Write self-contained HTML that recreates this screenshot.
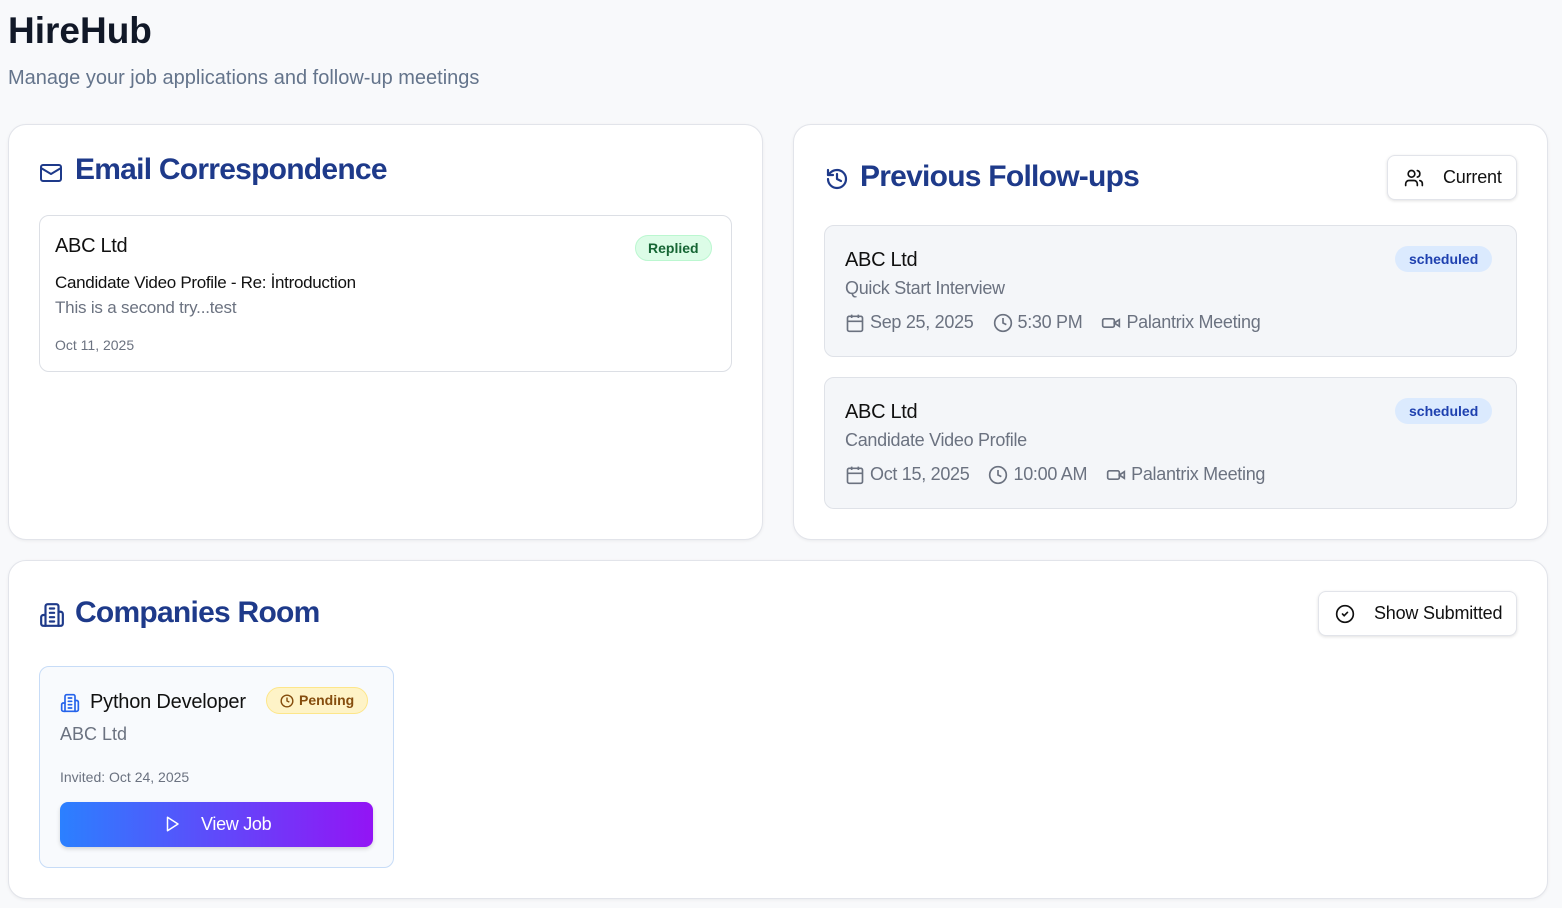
<!DOCTYPE html>
<html><head><meta charset="utf-8"><style>
*{box-sizing:border-box;margin:0;padding:0}
body{width:1562px;height:908px;background:#f8f9fb;font-family:"Liberation Sans",sans-serif;position:relative;overflow:hidden;color:#111827}
.a{position:absolute}
.card{position:absolute;background:#fff;border:1px solid #e2e4ea;border-radius:18px;box-shadow:0 1px 3px rgba(0,0,0,.06)}
h2{position:absolute;font-size:30px;font-weight:700;color:#1e3a8a;letter-spacing:-0.75px}
.btn{position:absolute;background:#fff;border:1px solid #e2e4ea;border-radius:8px;box-shadow:0 1px 3px rgba(0,0,0,.12);font-size:18px;color:#111;letter-spacing:-0.2px}
.fu{position:absolute;left:30px;width:693px;height:132px;background:#f4f6f9;border:1px solid #dfe2e8;border-radius:10px}
.badge{position:absolute;background:#dbeafe;color:#1e40af;font-weight:700;font-size:14px;border-radius:14px;height:26px;line-height:26px;padding:0 14px}
.meta{position:absolute;left:20px;top:86px;font-size:18px;color:#6b7280;display:flex;align-items:center;white-space:nowrap;letter-spacing:-0.3px}
.meta svg{margin-right:5px}
</style></head><body>
<div class="a" style="left:8px;top:10px;font-size:37px;font-weight:700;color:#111827">HireHub</div>
<div class="a" style="left:8px;top:67px;font-size:20px;color:#64748b">Manage your job applications and follow-up meetings</div>

<div class="card" style="left:8px;top:124px;width:755px;height:416px">
 <svg class="a" style="left:30px;top:36px" width="24" height="24" viewBox="0 0 24 24" fill="none" stroke="#1e3a8a" stroke-width="2" stroke-linecap="round" stroke-linejoin="round"><rect x="2" y="4" width="20" height="16" rx="2"/><path d="m22 7-10 6L2 7"/></svg>
 <h2 style="left:66px;top:28px">Email Correspondence</h2>
 <div class="a" style="left:30px;top:90px;width:693px;height:157px;border:1px solid #dcdfe5;border-radius:10px">
  <div class="a" style="left:15px;top:19px;font-size:20px;color:#111;letter-spacing:-0.3px">ABC Ltd</div>
  <div class="a" style="left:595px;top:19px;background:#dcfce7;border:1px solid #bbf7d0;color:#166534;font-weight:700;font-size:14px;border-radius:14px;height:26px;line-height:24px;padding:0 12px">Replied</div>
  <div class="a" style="left:15px;top:57px;font-size:17px;color:#111;letter-spacing:-0.3px">Candidate Video Profile - Re: İntroduction</div>
  <div class="a" style="left:15px;top:82px;font-size:17px;color:#6b7280;letter-spacing:-0.2px">This is a second try...test</div>
  <div class="a" style="left:15px;top:121px;font-size:14px;color:#6b7280">Oct 11, 2025</div>
 </div>
</div>

<div class="card" style="left:793px;top:124px;width:755px;height:416px">
 <svg class="a" style="left:31px;top:42px" width="24" height="24" viewBox="0 0 24 24" fill="none" stroke="#1e3a8a" stroke-width="2.2" stroke-linecap="round" stroke-linejoin="round"><path d="M3 12a9 9 0 1 0 9-9 9.75 9.75 0 0 0-6.74 2.74L3 8"/><path d="M3 3v5h5"/><path d="M12 7v5l4 2"/></svg>
 <h2 style="left:66px;top:35px">Previous Follow-ups</h2>
 <div class="btn" style="left:593px;top:30px;width:130px;height:45px">
  <svg class="a" style="left:16px;top:12px" width="20" height="20" viewBox="0 0 24 24" fill="none" stroke="#111" stroke-width="2" stroke-linecap="round"><path d="M16 21v-2a4 4 0 0 0-4-4H6a4 4 0 0 0-4 4v2"/><circle cx="9" cy="7" r="4"/><path d="M22 21v-2a4 4 0 0 0-3-3.87M16 3.13a4 4 0 0 1 0 7.75"/></svg>
  <span class="a" style="left:55px;top:11px">Current</span>
 </div>
 <div class="fu" style="top:100px">
  <div class="a" style="left:20px;top:23px;font-size:20px;color:#111;letter-spacing:-0.3px">ABC Ltd</div>
  <div class="badge" style="left:570px;top:20px">scheduled</div>
  <div class="a" style="left:20px;top:52px;font-size:18px;color:#6b7280;letter-spacing:-0.3px">Quick Start Interview</div>
  <div class="meta"><svg width="20" height="20" viewBox="0 0 24 24" fill="none" stroke="#6b7280" stroke-width="2"><rect x="3" y="4" width="18" height="18" rx="2"/><path d="M16 2v4M8 2v4M3 10h18"/></svg>Sep 25, 2025<span style="width:19px"></span><svg width="20" height="20" viewBox="0 0 24 24" fill="none" stroke="#6b7280" stroke-width="2"><circle cx="12" cy="12" r="10"/><path d="M12 6v6l4 2"/></svg>5:30 PM<span style="width:19px"></span><svg width="20" height="20" viewBox="0 0 24 24" fill="none" stroke="#6b7280" stroke-width="2"><rect x="2" y="7" width="14" height="10" rx="2"/><path d="m22 8-6 4 6 4z"/></svg>Palantrix Meeting</div>
 </div>
 <div class="fu" style="top:252px">
  <div class="a" style="left:20px;top:23px;font-size:20px;color:#111;letter-spacing:-0.3px">ABC Ltd</div>
  <div class="badge" style="left:570px;top:20px">scheduled</div>
  <div class="a" style="left:20px;top:52px;font-size:18px;color:#6b7280;letter-spacing:-0.3px">Candidate Video Profile</div>
  <div class="meta"><svg width="20" height="20" viewBox="0 0 24 24" fill="none" stroke="#6b7280" stroke-width="2"><rect x="3" y="4" width="18" height="18" rx="2"/><path d="M16 2v4M8 2v4M3 10h18"/></svg>Oct 15, 2025<span style="width:19px"></span><svg width="20" height="20" viewBox="0 0 24 24" fill="none" stroke="#6b7280" stroke-width="2"><circle cx="12" cy="12" r="10"/><path d="M12 6v6l4 2"/></svg>10:00 AM<span style="width:19px"></span><svg width="20" height="20" viewBox="0 0 24 24" fill="none" stroke="#6b7280" stroke-width="2"><rect x="2" y="7" width="14" height="10" rx="2"/><path d="m22 8-6 4 6 4z"/></svg>Palantrix Meeting</div>
 </div>
</div>

<div class="card" style="left:8px;top:560px;width:1540px;height:339px">
 <svg class="a" style="left:30px;top:41px" width="26" height="26" viewBox="0 0 24 24" fill="none" stroke="#1e3a8a" stroke-width="2" stroke-linecap="round"><path d="M6 22V4a2 2 0 0 1 2-2h8a2 2 0 0 1 2 2v18z"/><path d="M6 12H4a2 2 0 0 0-2 2v6a2 2 0 0 0 2 2h2M18 9h2a2 2 0 0 1 2 2v9a2 2 0 0 1-2 2h-2M10 6h4M10 10h4M10 14h4M10 18h4"/></svg>
 <h2 style="left:66px;top:35px">Companies Room</h2>
 <div class="btn" style="left:1309px;top:30px;width:199px;height:45px">
  <svg class="a" style="left:16px;top:12px" width="20" height="20" viewBox="0 0 24 24" fill="none" stroke="#111" stroke-width="2" stroke-linecap="round"><circle cx="12" cy="12" r="10"/><path d="m9 12 2 2 4-4"/></svg>
  <span class="a" style="left:55px;top:11px">Show Submitted</span>
 </div>
 <div class="a" style="left:30px;top:105px;width:355px;height:202px;background:#f8fafd;border:1px solid #c7dcf7;border-radius:10px">
  <svg class="a" style="left:20px;top:26px" width="20" height="20" viewBox="0 0 24 24" fill="none" stroke="#2563eb" stroke-width="2" stroke-linecap="round"><path d="M6 22V4a2 2 0 0 1 2-2h8a2 2 0 0 1 2 2v18z"/><path d="M6 12H4a2 2 0 0 0-2 2v6a2 2 0 0 0 2 2h2M18 9h2a2 2 0 0 1 2 2v9a2 2 0 0 1-2 2h-2M10 6h4M10 10h4M10 14h4M10 18h4"/></svg>
  <div class="a" style="left:50px;top:24px;font-size:20px;color:#111;letter-spacing:-0.2px">Python Developer</div>
  <div class="a" style="left:226px;top:20px;background:#fef3c7;border:1px solid #fde68a;color:#854d0e;font-weight:700;font-size:14px;border-radius:14px;height:27px;line-height:25px;padding:0 13px 0 32px">Pending<svg class="a" style="left:13px;top:6px" width="14" height="14" viewBox="0 0 24 24" fill="none" stroke="#854d0e" stroke-width="2.4"><circle cx="12" cy="12" r="10"/><path d="M12 6v6l4 2"/></svg></div>
  <div class="a" style="left:20px;top:57px;font-size:18px;color:#6b7280">ABC Ltd</div>
  <div class="a" style="left:20px;top:102px;font-size:14px;color:#6b7280">Invited: Oct 24, 2025</div>
  <div class="a" style="left:20px;top:135px;width:313px;height:45px;border-radius:8px;background:linear-gradient(90deg,#2b80ff,#9314f5);box-shadow:0 2px 4px rgba(0,0,0,.15);color:#fff;font-size:18px">
   <svg class="a" style="left:103px;top:13px" width="18" height="18" viewBox="0 0 24 24" fill="none" stroke="#fff" stroke-width="2" stroke-linejoin="round"><path d="M6 3l14 9-14 9z"/></svg>
   <span class="a" style="left:141px;top:12px;letter-spacing:-0.3px">View Job</span>
  </div>
 </div>
</div>
</body></html>
